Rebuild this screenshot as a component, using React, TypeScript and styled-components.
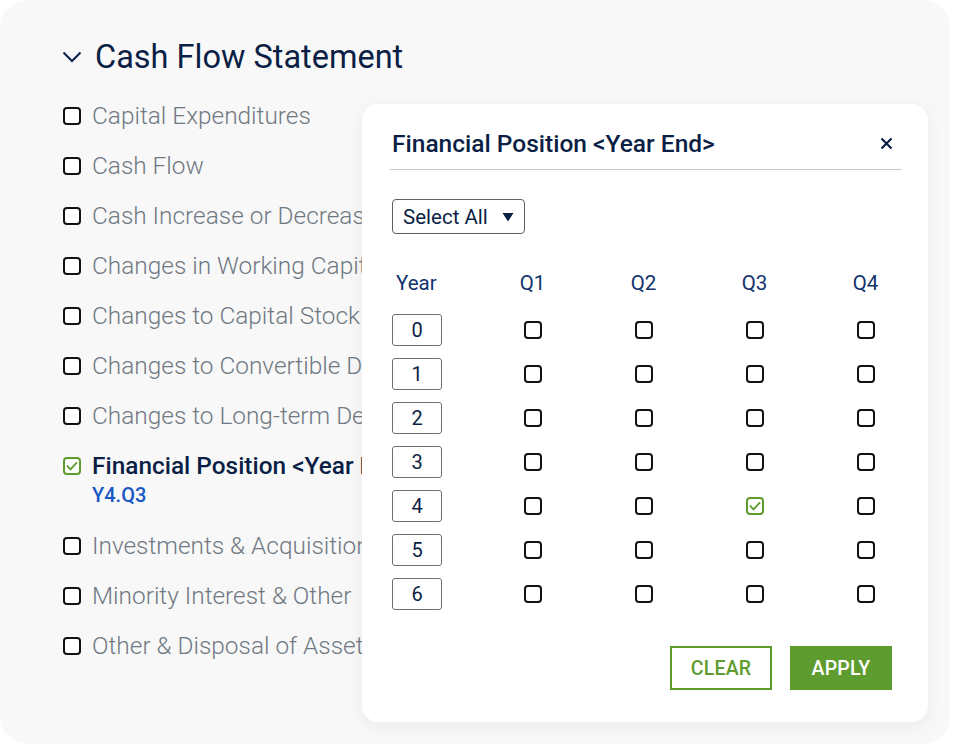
import styled, { createGlobalStyle } from "styled-components";

const GlobalStyle = createGlobalStyle`
  html, body {
    margin: 0;
    padding: 0;
    background: #ffffff;
    font-family: Roboto, "Liberation Sans", Arial, sans-serif;
  }
  * { box-sizing: border-box; }
`;

const navy = "#0b1f45";
const green = "#5e9c2f";

const Card = styled.div`
  position: relative;
  width: 950px;
  height: 744px;
  background: #f8f8f9;
  border-radius: 28px;
  overflow: hidden;
  padding: 38px 0 0 62px;
`;

const Heading = styled.div`
  display: flex;
  align-items: center;
  gap: 13px;
  color: ${navy};
  font-size: 32.5px;
  font-weight: 400;
  height: 38px;
`;

const List = styled.div`
  display: flex;
  flex-direction: column;
  margin-top: 26px;
  padding-left: 1px;
`;

const Item = styled.div`
  display: flex;
  align-items: flex-start;
  gap: 11px;
  min-height: 50px;
`;

const ItemBody = styled.div`
  display: flex;
  flex-direction: column;
  white-space: nowrap;
`;

const ItemLabel = styled.span<{ $active?: boolean }>`
  font-size: 24.4px;
  line-height: 28px;
  color: ${({ $active }) => ($active ? navy : "#707982")};
  font-weight: ${({ $active }) => ($active ? 500 : 300)};
`;

const Sub = styled.span`
  font-size: 20px;
  line-height: 30px;
  color: #1857c4;
  font-weight: 500;
  margin-bottom: 22px;
`;

const Box = styled.span<{ $checked?: boolean }>`
  display: inline-flex;
  align-items: center;
  justify-content: center;
  flex-shrink: 0;
  width: 18px;
  height: 18px;
  border: 2px solid ${({ $checked }) => ($checked ? green : "#111")};
  border-radius: 4px;
  background: #fff;
`;

const ListBox = styled(Box)`
  margin-top: 5px;
`;

const Popup = styled.div`
  position: absolute;
  left: 362px;
  top: 104px;
  width: 566px;
  height: 618px;
  background: #fff;
  border-radius: 16px;
  box-shadow: 0 4px 18px rgba(0, 0, 0, 0.06);
  padding: 26px 26px 32px 30px;
  display: flex;
  flex-direction: column;
`;

const PopupHead = styled.div`
  display: flex;
  align-items: center;
  justify-content: space-between;
  height: 27px;
  padding-right: 9px;
`;

const Title = styled.h2`
  margin: 0;
  font-size: 24.5px;
  font-weight: 500;
  color: ${navy};
`;

const Close = styled.button`
  border: 0;
  background: none;
  padding: 0;
  display: flex;
  cursor: pointer;
`;

const Divider = styled.div`
  height: 1px;
  background: #c6c8cc;
  margin: 12px 0 0 -2px;
`;

const SelectBox = styled.div`
  align-self: flex-start;
  margin-top: 29px;
  height: 35px;
  padding: 0 10px;
  display: flex;
  align-items: center;
  gap: 14px;
  border: 1px solid #5c6066;
  border-radius: 4px;
  font-size: 20.5px;
  color: ${navy};
`;

const Grid = styled.div`
  display: grid;
  grid-template-columns: 85px repeat(4, 111px);
  grid-template-rows: 40px repeat(7, 44px);
  margin-top: 34px;
  align-items: center;
`;

const HeadCell = styled.div<{ $left?: boolean }>`
  font-size: 20.5px;
  color: #12336e;
  text-align: ${({ $left }) => ($left ? "left" : "center")};
  padding-left: ${({ $left }) => ($left ? "4px" : "0")};
  align-self: start;
  line-height: 30px;
`;

const Cell = styled.div<{ $start?: boolean }>`
  display: flex;
  justify-content: ${({ $start }) => ($start ? "flex-start" : "center")};
  align-items: center;
`;

const YearBox = styled.div`
  width: 50px;
  height: 32px;
  border: 1px solid #6b6f75;
  border-radius: 3px;
  display: flex;
  align-items: center;
  justify-content: center;
  font-size: 20px;
  color: ${navy};
`;

const Actions = styled.div`
  margin-top: auto;
  display: flex;
  justify-content: flex-end;
  gap: 18px;
  padding-right: 10px;
`;

const Button = styled.button<{ $primary?: boolean }>`
  width: 102px;
  height: 44px;
  border: 2px solid ${green};
  background: ${({ $primary }) => ($primary ? green : "#fff")};
  color: ${({ $primary }) => ($primary ? "#fff" : green)};
  font-family: inherit;
  font-size: 19.5px;
  font-weight: 500;
  letter-spacing: 0.2px;
  cursor: pointer;
`;

const Check = () => (
  <svg width="12" height="10" viewBox="0 0 12 10">
    <path d="M1 4.6 L4.5 8.3 L11 1.3" fill="none" stroke={green} strokeWidth="1.9" />
  </svg>
);

const items = [
  "Capital Expenditures",
  "Cash Flow",
  "Cash Increase or Decrease",
  "Changes in Working Capital",
  "Changes to Capital Stock",
  "Changes to Convertible Debt",
  "Changes to Long-term Debt",
  "Financial Position <Year End>",
  "Investments & Acquisitions",
  "Minority Interest & Other",
  "Other & Disposal of Assets",
];

const years = [0, 1, 2, 3, 4, 5, 6];
const quarters = ["Q1", "Q2", "Q3", "Q4"];

export default function App() {
  return (
    <>
      <GlobalStyle />
      <Card>
        <Heading>
          <svg width="20" height="12" viewBox="0 0 20 12">
            <path d="M1.5 1.5 L10 10 L18.5 1.5" fill="none" stroke={navy} strokeWidth="2" />
          </svg>
          Cash Flow Statement
        </Heading>
        <List>
          {items.map((it) => {
            const active = it.startsWith("Financial");
            return (
              <Item key={it}>
                <ListBox $checked={active}>{active && <Check />}</ListBox>
                <ItemBody>
                  <ItemLabel $active={active}>{it}</ItemLabel>
                  {active && <Sub>Y4.Q3</Sub>}
                </ItemBody>
              </Item>
            );
          })}
        </List>

        <Popup>
          <PopupHead>
            <Title>Financial Position &lt;Year End&gt;</Title>
            <Close aria-label="close">
              <svg width="13" height="13" viewBox="0 0 13 13">
                <path d="M1.5 1.5 L11.5 11.5 M11.5 1.5 L1.5 11.5" stroke={navy} strokeWidth="2.2" />
              </svg>
            </Close>
          </PopupHead>
          <Divider />
          <SelectBox>
            Select All
            <svg width="12" height="10" viewBox="0 0 12 10">
              <path d="M0.5 1 L11.5 1 L6 9.5 Z" fill={navy} />
            </svg>
          </SelectBox>
          <Grid>
            <HeadCell $left>Year</HeadCell>
            {quarters.map((q) => (
              <HeadCell key={q}>{q}</HeadCell>
            ))}
            {years.flatMap((y) => [
              <Cell key={`y${y}`} $start>
                <YearBox>{y}</YearBox>
              </Cell>,
              ...quarters.map((q) => {
                const on = y === 4 && q === "Q3";
                return (
                  <Cell key={`${y}${q}`}>
                    <Box $checked={on}>{on && <Check />}</Box>
                  </Cell>
                );
              }),
            ])}
          </Grid>
          <Actions>
            <Button>CLEAR</Button>
            <Button $primary>APPLY</Button>
          </Actions>
        </Popup>
      </Card>
    </>
  );
}
